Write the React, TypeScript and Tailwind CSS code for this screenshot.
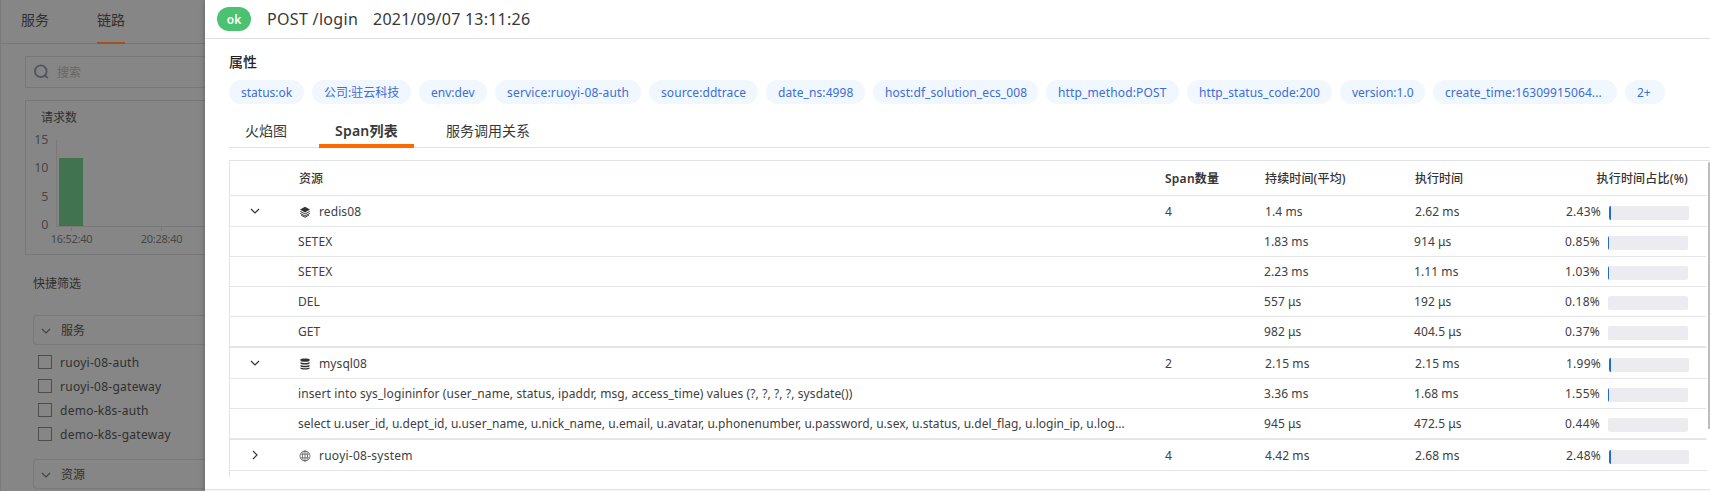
import type { ReactNode } from "react";

type Attr = { label: string; box: string };

const attributes: Attr[] = [
  { label: "status:ok", box: "w-[75px]" },
  { label: "公司:驻云科技", box: "w-[99px]" },
  { label: "env:dev", box: "w-[68px]" },
  { label: "service:ruoyi-08-auth", box: "w-[146px] tracking-[0.18px]" },
  { label: "source:ddtrace", box: "w-[109px] tracking-[0.08px]" },
  { label: "date_ns:4998", box: "w-[99px] tracking-[0.09px]" },
  { label: "host:df_solution_ecs_008", box: "w-[165px] tracking-[0.09px]" },
  { label: "http_method:POST", box: "w-[133px] tracking-[0.14px]" },
  { label: "http_status_code:200", box: "w-[145px] tracking-[0.08px]" },
  { label: "version:1.0", box: "w-[85px]" },
  { label: "create_time:16309915064...", box: "w-[184px] tracking-[0.1px]" },
  { label: "2+", box: "w-[40px]" },
];

type Span = { name: string; avg: string; exec: string; ratio: string; bar: number; track?: string };
type Group = Span & { icon: ReactNode; count: number; open: boolean; children: Span[] };

function Layers() {
  return (
    <svg viewBox="0 0 12 12" className="size-3" fill="#333">
      <path d="M6 .8 11 3.6 6 6.4 1 3.6Z" />
      <path d="M1.2 5.3 6 8l4.8-2.7M1.2 7.3 6 10l4.8-2.7M2 9l4 2.3L10 9" fill="none" stroke="#333" strokeWidth=".95" />
    </svg>
  );
}

function Database() {
  return (
    <svg viewBox="0 0 12 12" className="size-3" fill="#333">
      <path d="M1.5 1.6C1.5.2 10.5.2 10.5 1.6v1.2c0 1.4-9 1.4-9 0Z" />
      <path d="M1.5 4.2c1.5 1 7.5 1 9 0v1.3c0 1.3-9 1.3-9 0Z" />
      <path d="M1.5 6.9c1.5 1 7.5 1 9 0v1.3c0 1.3-9 1.3-9 0Z" />
      <path d="M1.5 9.5c1.5 1 7.5 1 9 0v.9c0 1.4-9 1.4-9 0Z" />
    </svg>
  );
}

function Globe() {
  return (
    <svg viewBox="0 0 12 12" className="size-3" fill="none" stroke="#555" strokeWidth=".75">
      <circle cx="6" cy="6" r="5" />
      <ellipse cx="6" cy="6" rx="2.5" ry="5" />
      <path d="M6 1v10M1.4 4.2h9.2M1.4 7.8h9.2" />
    </svg>
  );
}

function Chevron({ open, color }: { open: boolean; color: string }) {
  return (
    <svg viewBox="0 0 10 10" className="size-2.5" fill="none" stroke={color} strokeWidth="1.2">
      <path d={open ? "M1 3l4 4 4-4" : "M3 1l4 4-4 4"} />
    </svg>
  );
}

const groups: Group[] = [
  {
    name: "redis08", icon: <Layers />, count: 4, open: true, avg: "1.4 ms", exec: "2.62 ms", ratio: "2.43%", bar: 2, track: "tracking-[0.1px]",
    children: [
      { name: "SETEX", avg: "1.83 ms", exec: "914 μs", ratio: "0.85%", bar: 1, track: "tracking-[0.15px]" },
      { name: "SETEX", avg: "2.23 ms", exec: "1.11 ms", ratio: "1.03%", bar: 1, track: "tracking-[0.15px]" },
      { name: "DEL", avg: "557 μs", exec: "192 μs", ratio: "0.18%", bar: 0 },
      { name: "GET", avg: "982 μs", exec: "404.5 μs", ratio: "0.37%", bar: 0 },
    ],
  },
  {
    name: "mysql08", icon: <Database />, count: 2, open: true, avg: "2.15 ms", exec: "2.15 ms", ratio: "1.99%", bar: 2, track: "tracking-[0.1px]",
    children: [
      { name: "insert into sys_logininfor (user_name, status, ipaddr, msg, access_time) values (?, ?, ?, ?, sysdate())", avg: "3.36 ms", exec: "1.68 ms", ratio: "1.55%", bar: 1, track: "tracking-[0.11px]" },
      { name: "select u.user_id, u.dept_id, u.user_name, u.nick_name, u.email, u.avatar, u.phonenumber, u.password, u.sex, u.status, u.del_flag, u.login_ip, u.log...", avg: "945 μs", exec: "472.5 μs", ratio: "0.44%", bar: 0, track: "tracking-[0.035px]" },
    ],
  },
  { name: "ruoyi-08-system", icon: <Globe />, count: 4, open: false, avg: "4.42 ms", exec: "2.68 ms", ratio: "2.48%", bar: 2, track: "tracking-[0.25px]", children: [] },
];

function Metrics({ row, offset }: { row: Span; offset: string }) {
  return (
    <>
      <div className="w-[150px] tracking-[0.08px]">{row.avg}</div>
      <div className="w-[151px] tracking-[0.08px]">{row.exec}</div>
      <div className="w-[43px] tracking-[0.25px]">{row.ratio}</div>
      <div className={`h-3.5 w-20 overflow-hidden rounded-xs bg-[#ebebf0] ${offset}`}>
        <div className="h-full bg-[#1f6bd6]" style={{ width: row.bar }} />
      </div>
    </>
  );
}

function SpanTable() {
  return (
    <div className="ml-6 flex h-[317px] border-t border-[#dfe2e6]">
      <div className="flex w-[1478px] flex-col border-l border-[#dfe2e6] text-xs text-[#404040]">
        <div className="flex h-[35px] shrink-0 items-center border-b border-[#e6e6e8] pt-0.5 text-[#333]">
          <div className="ml-[69px] w-[866px] font-medium">资源</div>
          <div className="w-[100px] font-semibold tracking-[0.25px]">Span数量</div>
          <div className="w-[150px] font-medium tracking-[0.15px]">持续时间(平均)</div>
          <div className="w-[150px] font-medium">执行时间</div>
          <div className="w-[123px] text-right font-medium tracking-[0.2px]">执行时间占比(%)</div>
        </div>
        {groups.map((g) => (
          <div key={g.name} className={g.open ? "shrink-0 border-b border-[#e6e6e8]" : "shrink-0"}>
            <div className="flex h-[31px] items-center border-b border-[#e6e6e8] pt-0.5">
              <div className="-mt-0.5 ml-5 w-[49px]"><Chevron open={g.open} color="#333" /></div>
              <div className="flex w-[866px] items-center gap-2">
                <span className="-mt-px">{g.icon}</span>
                <span className={g.track}>{g.name}</span>
              </div>
              <div className="w-[100px]">{g.count}</div>
              <Metrics row={g} offset="mt-0.5" />
            </div>
            {g.children.map((c, i) => (
              <div key={i} className="mr-px flex h-[30px] items-center border-b border-[#e6e6e8]">
                <div className="ml-[68px] w-[966px] whitespace-nowrap"><span className={c.track}>{c.name}</span></div>
                <Metrics row={c} offset="mt-[3px]" />
              </div>
            ))}
          </div>
        ))}
      </div>
      <div className="mt-px ml-px h-[267px] w-0.5 rounded-t-xs bg-[#bdbdbd]" />
    </div>
  );
}

function FilterHeader({ title }: { title: string }) {
  return (
    <div className="ml-8 flex h-[30px] items-center rounded-l-sm border border-r-0 border-[#797979] pt-0.5 pl-[7px]">
      <Chevron open color="#444" />
      <span className="ml-2.5">{title}</span>
    </div>
  );
}

function Sidebar() {
  return (
    <aside className="flex h-[491px] w-[205px] shrink-0 flex-col overflow-hidden border-l border-[#7a7a7a] bg-[#868686] text-xs text-[#303030]">
      <div className="flex h-11 shrink-0 border-b border-[#787878] text-sm leading-[40px]">
        <div className="ml-5 w-7">服务</div>
        <div className="ml-12 h-11 w-7 border-b-2 border-[#9c5423]">链路</div>
      </div>
      <div className="mt-3 ml-6 flex h-8 shrink-0 items-center border border-r-0 border-[#787878] pl-2">
        <svg viewBox="0 0 16 16" className="size-4" fill="none" stroke="#505660" strokeWidth="1.9">
          <circle cx="6.8" cy="7.2" r="5.8" />
          <path d="M11 11.300l2.800 2.800" />
        </svg>
        <span className="ml-[7px] pt-0.5 text-[#666]">搜索</span>
      </div>
      <div className="mt-3 ml-6 flex h-[155px] shrink-0 flex-col border border-r-0 border-[#787878]">
        <div className="mt-[9px] ml-[15px] leading-4">请求数</div>
        <svg className="mt-2 h-[120px] w-[179px] shrink-0" viewBox="26 134 179 120" fontFamily="Noto Sans" fontSize="12.5" fill="#464646">
          <path d="M56.5 140v86M56 226.5h150M71.5 227v4M161.5 227v4" stroke="#797979" fill="none" />
          <rect x="59" y="158" width="24" height="68" fill="#417350" />
          <g textAnchor="end">
            <text x="48.5" y="144">15</text>
            <text x="48.5" y="172">10</text>
            <text x="48.5" y="201">5</text>
            <text x="48.5" y="229">0</text>
          </g>
          <g textAnchor="middle" fontSize="11" letterSpacing="-.25">
            <text x="71.5" y="243">16:52:40</text>
            <text x="161.5" y="243">20:28:40</text>
          </g>
        </svg>
      </div>
      <div className="mt-[19px] ml-8 h-[41px] shrink-0 leading-5">快捷筛选</div>
      <FilterHeader title="服务" />
      <div className="mt-[5px] mb-[13px] tracking-[0.26px]">
        {["ruoyi-08-auth", "ruoyi-08-gateway", "demo-k8s-auth", "demo-k8s-gateway"].map((n) => (
          <div key={n} className="ml-[37px] flex h-6 items-center">
            <span className="size-3.5 border border-[#4d4d4d]" />
            <span className="ml-2 pt-0.5">{n}</span>
          </div>
        ))}
      </div>
      <FilterHeader title="资源" />
    </aside>
  );
}

export default function App() {
  return (
    <div className="flex h-[491px] w-[1710px] overflow-hidden bg-white font-['Noto_Sans','Noto_Sans_CJK_SC',sans-serif]">
      <Sidebar />
      <main className="flex min-w-0 flex-1 flex-col shadow-[0_0_5px_rgba(0,0,0,0.3)]">
        <header className="flex h-[39px] shrink-0 items-center border-b border-[#dfe2e8] pl-3 text-base text-[#383838]">
          <span className="flex h-6 w-[34px] items-center justify-center rounded-full bg-[#4bc272] pt-px text-xs font-semibold text-white">ok</span>
          <span className="ml-4 w-[106px] tracking-[0.32px] whitespace-nowrap">POST /login</span>
          <span className="tracking-[0.24px] whitespace-nowrap">2021/09/07 13:11:26</span>
        </header>
        <h2 className="mt-[13px] ml-6 h-5 shrink-0 text-sm leading-5 font-medium text-[#222]">属性</h2>
        <div className="mt-2 ml-6 flex shrink-0 gap-2">
          {attributes.map((a) => (
            <span key={a.label} className={`flex h-6 shrink-0 items-center rounded-full bg-[#f0f7ff] pt-0.5 pl-3 text-xs whitespace-nowrap text-[#3c6dd6] ${a.box}`}>
              {a.label}
            </span>
          ))}
        </div>
        <nav className="mt-3 ml-6 flex h-8 shrink-0 border-b border-[#e0e2e6] text-sm leading-[30px] text-[#383838]">
          <div className="ml-4 w-[74px]">火焰图</div>
          <div className="h-8 w-[95px] border-b-4 border-[#ff6a00] text-center font-semibold tracking-[0.2px]">Span列表</div>
          <div className="ml-8">服务调用关系</div>
        </nav>
        <div className="mt-3">
          <SpanTable />
        </div>
        <div className="mt-3 h-0.5 border-t border-[#dfe3e8] bg-[#f3f6fa]" />
      </main>
    </div>
  );
}
